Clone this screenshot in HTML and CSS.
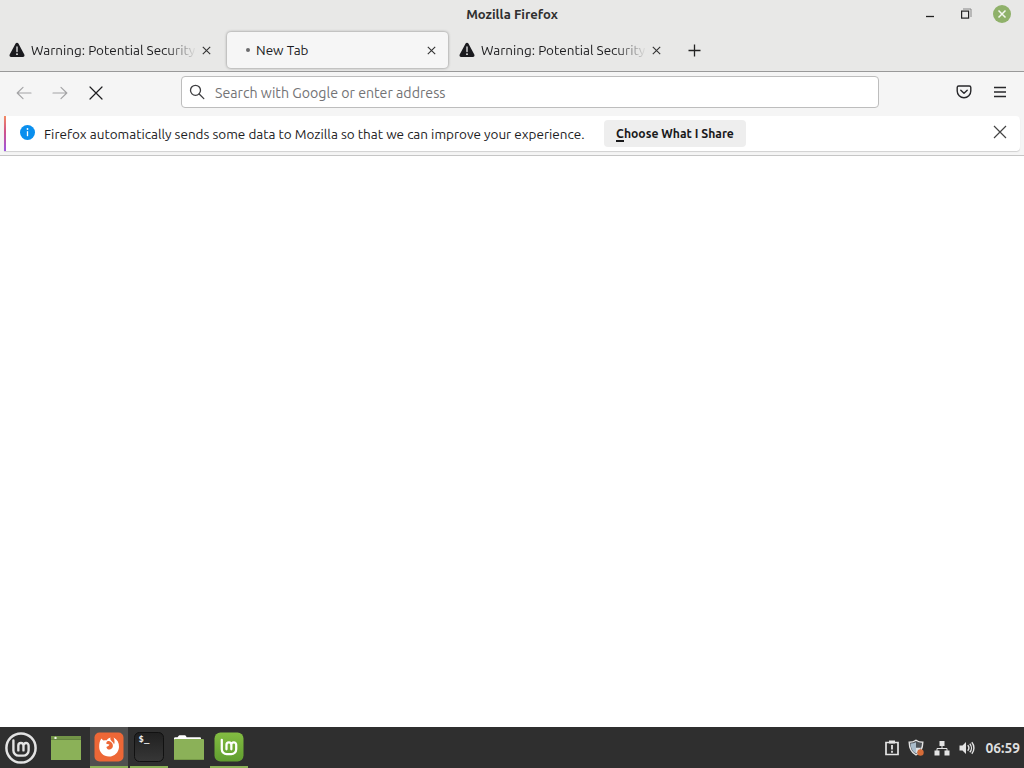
FILE: index.html
```
<!DOCTYPE html>
<html lang="en">
<head>
  <meta charset="UTF-8">
  <title>Mozilla Firefox</title>
  <link rel="stylesheet" href="styles.css">
</head>
<body>

<!-- shared icons -->
<svg class="defs" width="0" height="0">
  <symbol id="warning" viewBox="0 0 16 16">
    <path d="M6.6 1.6a1.6 1.6 0 0 1 2.8 0l5.9 11a1.6 1.6 0 0 1-1.4 2.4H2.1a1.6 1.6 0 0 1-1.4-2.4z" fill="#1b1b1f"/>
    <path d="M8 5v4.6" stroke="#eee" stroke-width="1.3" stroke-linecap="round"/>
    <circle cx="8" cy="12.2" r=".9" fill="#eee"/>
  </symbol>
  <symbol id="close" viewBox="0 0 9 9">
    <path d="M.8.8l7.4 7.4M8.2.8L.8 8.2" stroke="#333" stroke-width="1.1"/>
  </symbol>
  <symbol id="mint" viewBox="0 0 20 20">
    <path d="M2 2v10.5a5.5 5.5 0 0 0 5.5 5.500h5a5.500 5.500 0 0 0 5.500-5.500V7.500a2.700 2.700 0 0 0-5.400 0V12.500M12.600 7.500a2.700 2.700 0 0 0-5.400 0V12.500" fill="none" stroke="currentColor" stroke-width="2.5" stroke-linecap="round"/>
  </symbol>
</svg>

<header class="titlebar">
  <span class="title">Mozilla Firefox</span>
  <div class="window-buttons">
    <svg width="10" height="14" viewBox="0 0 10 14"><path d="M1 9.500h8" stroke="#222" stroke-width="1.300"/></svg>
    <svg width="12" height="12" viewBox="0 0 12 12" fill="none"><path d="M3 1h8v8" stroke="#888"/><rect x="1.600" y="3.100" width="7" height="7" stroke="#222" stroke-width="1.200"/></svg>
    <svg width="18" height="18" viewBox="0 0 18 18"><circle cx="9" cy="9" r="9" fill="#8fb16a"/><path d="M5.500 5.500l7 7M12.500 5.500l-7 7" stroke="#f4f7ef" stroke-width="1.500"/></svg>
  </div>
</header>

<nav class="tabs">
  <div class="tab">
    <svg class="tab-icon" width="16" height="16"><use href="#warning"/></svg>
    <span class="tab-label fade">Warning: Potential Security</span>
    <svg class="tab-close" width="9" height="9"><use href="#close"/></svg>
  </div>
  <div class="tab active">
    <span class="loading-dot"></span>
    <span class="tab-label">New Tab</span>
    <svg class="tab-close" width="9" height="9"><use href="#close"/></svg>
  </div>
  <div class="tab">
    <svg class="tab-icon" width="16" height="16"><use href="#warning"/></svg>
    <span class="tab-label fade">Warning: Potential Security</span>
    <svg class="tab-close" width="9" height="9"><use href="#close"/></svg>
  </div>
  <svg class="new-tab" width="13" height="13" viewBox="0 0 13 13"><path d="M6.500.5v12M.5 6.500h12" stroke="#222" stroke-width="1.300"/></svg>
</nav>

<div class="toolbar">
  <div class="nav-buttons">
    <svg width="16" height="16" viewBox="0 0 16 16" fill="none" stroke="#a4a4a6" stroke-width="1.200" stroke-linecap="round" stroke-linejoin="round"><path d="M15 8H1.200M7 2.400L1.200 8 7 13.600"/></svg>
    <svg width="16" height="16" viewBox="0 0 16 16" fill="none" stroke="#a4a4a6" stroke-width="1.200" stroke-linecap="round" stroke-linejoin="round"><path d="M1 8h13.800M9 2.400L14.800 8 9 13.600"/></svg>
    <svg width="16" height="16" viewBox="0 0 16 16" fill="none" stroke="#1d1d1f" stroke-width="1.200" stroke-linecap="round"><path d="M2 2l12 12M14 2L2 14"/></svg>
  </div>
  <div class="urlbar">
    <svg width="16" height="16" viewBox="0 0 16 16" fill="none" stroke="#3d3d40" stroke-width="1.300" stroke-linecap="round"><circle cx="6.500" cy="6.300" r="5"/><path d="M10.200 10l4.600 4.600"/></svg>
    <span class="placeholder">Search with Google or enter address</span>
  </div>
  <div class="tool-buttons">
    <svg width="16" height="16" viewBox="0 0 16 16" fill="none" stroke="#28282b" stroke-width="1.400" stroke-linecap="round" stroke-linejoin="round"><path d="M2.700 2h10.600a1.500 1.500 0 0 1 1.500 1.500V7a6.800 6.800 0 0 1-13.600 0V3.500A1.500 1.500 0 0 1 2.700 2z"/><path d="M4.800 6.200L8 9.200l3.200-3"/></svg>
    <svg width="16" height="16" viewBox="0 0 16 16" stroke="#28282b" stroke-width="1.300"><path d="M2 3.500h12M2 8h12M2 12.500h12"/></svg>
  </div>
</div>

<div class="notice-area">
  <div class="notice">
    <svg class="info" width="15" height="15" viewBox="0 0 15 15"><circle cx="7.500" cy="7.500" r="7.500" fill="#0a8fee"/><circle cx="7.500" cy="4" r=".9" fill="#fff"/><path d="M7.500 6.200v5" stroke="#fff" stroke-width="1.300"/></svg>
    <span class="notice-text">Firefox automatically sends some data to Mozilla so that we can improve your experience.</span>
    <button class="choose"><span class="accesskey">C</span>hoose What I Share</button>
    <svg class="notice-close" width="14" height="14" viewBox="0 0 14 14"><path d="M1 1l12 12M13 1L1 13" stroke="#444" stroke-width="1.200"/></svg>
  </div>
</div>

<main class="page"></main>

<footer class="panel">
  <div class="launchers">
    <div class="launcher menu">
      <svg width="32" height="32" viewBox="0 0 32 32"><circle cx="16" cy="16" r="14.600" fill="none" stroke="#e3e3e3" stroke-width="2.500"/><g color="#e3e3e3"><use href="#mint" x="6.500" y="6.500" width="19" height="19"/></g></svg>
    </div>
    <div class="launcher">
      <svg width="30" height="24" viewBox="0 0 30 24"><rect width="30" height="24" fill="#8bb158"/><path d="M0 0h30v3.500H0z" fill="#729447"/><circle cx="4.500" cy="2" r="1.200" fill="#f1f5e9"/><path d="M0 3.500h30" stroke="#658440"/></svg>
    </div>
    <div class="launcher running focused">
      <svg width="30" height="30" viewBox="0 0 30 30">
        <rect x=".5" y=".5" width="29" height="29" rx="5" fill="#ed6736"/>
        <path d="M7.500 6.500c.6 1 1.300 1.700 2.200 2.100 1-.4 2-.5 3-.4 1-1.200 2.200-2 3.800-2.600-.5 1.500 0 2.600 1.200 3.600 1.200.9 2 1.900 2.300 3.200.9-1.700.7-4-.4-6.900 3.600 2 5.600 5.200 5.400 9.400-.3 5.500-4.500 9.600-10 9.600s-9.800-4.200-9.800-9.500c0-3.600.4-6.500 2.300-8.500z" fill="#fff"/>
        <path d="M13.400 9.200c-.9.800-1.200 1.700-1.100 2.500l3.100.8c-.5 1.400-1.600 1.900-3 2.400.3 1.900 1.900 2.900 3.600 2.500 2.200-.5 3.300-2.500 2.800-4.700-.4-1.800-1.800-2.900-3.200-3.500-.8-.3-1.500-.3-2.200 0z" fill="#ed6736"/>
      </svg>
    </div>
    <div class="launcher running">
      <svg width="30" height="30" viewBox="0 0 30 30"><defs><linearGradient id="term" x2="0" y2="1"><stop stop-color="#202020"/><stop offset="1" stop-color="#373737"/></linearGradient></defs><rect x=".5" y=".5" width="29" height="29" rx="5" fill="url(#term)" stroke="#111"/><text x="4.500" y="10" class="term-text">$_</text></svg>
    </div>
    <div class="launcher">
      <svg width="30" height="26" viewBox="0 0 30 26"><path d="M0 4a1.500 1.500 0 0 1 1.500-1.800H3.500l1-1.200a1.500 1.500 0 0 1 1.200-.8h5a1.500 1.500 0 0 1 1.300.8l.6 1.200H26a1 1 0 0 1 1 1V5H0z" fill="#fff"/><rect y="4" width="30" height="21" rx="1" fill="#8bb158"/><path d="M0 24.500h30" stroke="#769a48"/></svg>
    </div>
    <div class="launcher running">
      <svg width="30" height="30" viewBox="0 0 30 30"><defs><linearGradient id="leaf" x2="0" y2="1"><stop stop-color="#83bd42"/><stop offset="1" stop-color="#609d2f"/></linearGradient></defs><rect x=".5" y=".5" width="29" height="29" rx="6" fill="url(#leaf)"/><g color="#fff"><use href="#mint" x="6" y="6" width="18" height="18"/></g></svg>
    </div>
  </div>
  <div class="tray">
    <svg width="16" height="18" viewBox="0 0 16 18"><path d="M2 3.500h12v12H2z" fill="none" stroke="#e4e4e4" stroke-width="1.700"/><path d="M5 1.500h6v3H5z" fill="#e4e4e4"/><path d="M8 6v4.500M8 11.700v2" stroke="#e4e4e4" stroke-width="1.800"/></svg>
    <svg width="17" height="18" viewBox="0 0 17 18"><path d="M8 1.200c2 1.500 4.200 2 6.800 2-.1 6-1.600 10-6.800 12.800C2.800 13.200 1.300 9.200 1.200 3.200c2.600 0 4.800-.5 6.800-2z" fill="#4e5358" stroke="#e4e4e4" stroke-width="1.400"/><path d="M8 3.200v11.300C4.100 12.300 2.800 9 2.600 4.500c2-.1 3.700-.5 5.400-1.300z" fill="#a9bccb"/><path d="M8 8.800h5c-1 2.600-2.300 4.300-5 5.700z" fill="#dcdfe2"/><circle cx="12.500" cy="13.500" r="3.200" fill="#d66c38"/></svg>
    <svg width="16" height="16" viewBox="0 0 16 16"><path d="M5.500 1h5v5h-5zM.5 10.500h5v5h-5zM10.500 10.500h5v5h-5z" fill="#e4e4e4"/><path d="M8 6v2.500M3 11V8.500h10V11" fill="none" stroke="#e4e4e4"/></svg>
    <svg width="16" height="16" viewBox="0 0 16 16"><path d="M.5 5.500h3L7 2v12l-3.500-3.500h-3z" fill="#e4e4e4"/><path d="M8.700 5.300a4 4 0 0 1 0 5.400M10.800 3.700a6.500 6.500 0 0 1 0 8.600M12.800 2.200a9 9 0 0 1 0 11.600" fill="none" stroke="#e4e4e4" stroke-width="1.400"/></svg>
    <span class="clock">06:59</span>
  </div>
</footer>

</body>
</html>
```
FILE: styles.css
```
* {
  box-sizing: border-box;
}

body {
  margin: 0;
  width: 1024px;
  height: 768px;
  display: flex;
  flex-direction: column;
  overflow: hidden;
  background: #fff;
  color: #1c1c1e;
  font-family: Ubuntu, "Noto Sans", sans-serif;
  font-size: 13.5px;
  white-space: nowrap;
}

svg {
  display: block;
  flex: none;
}

.defs {
  position: absolute;
}

/* window frame */
.titlebar {
  height: 29px;
  flex: none;
  display: grid;
  grid-template-columns: 1fr auto 1fr;
  align-items: center;
  background: #e8e8e7;
}

.title {
  grid-column: 2;
  margin-top: -2px;
  font-size: 13.1px;
  font-weight: 600;
  color: #303030;
}

.window-buttons {
  display: flex;
  align-items: center;
  justify-content: flex-end;
  padding-right: 13px;
  margin-top: -1px;
}

.window-buttons svg {
  margin-left: 21px;
}

.window-buttons svg:nth-child(2) {
  margin-left: 25px;
}

/* tabs */
.tabs {
  height: 43px;
  flex: none;
  display: flex;
  align-items: flex-start;
  padding: 3px 0 0 2px;
  background: #e8e8e7;
  border-bottom: 1px solid #999;
}

.tab {
  width: 221px;
  height: 36px;
  margin-right: 4px;
  padding: 0 12px 0 7px;
  display: flex;
  align-items: center;
  border-radius: 4px;
}

.tab.active {
  background: #f6f6f6;
  box-shadow: 0 0 3px rgba(0,0,0,0.45);
}

.tab-icon {
  margin-right: 6px;
}

.tab-label.fade {
  width: 170px;
  -webkit-mask-image: linear-gradient(to left, transparent 4px, #000 36px);
  mask-image: linear-gradient(to left, transparent 4px, #000 36px);
}

.tab-close {
  margin-left: auto;
}

.tab-label.fade + .tab-close {
  margin-left: 1px;
}

.loading-dot {
  width: 4px;
  height: 4px;
  margin: 0 6px 0 12px;
  border-radius: 50%;
  background: #6c6c6e;
}

.new-tab {
  margin: 12px 0 0 11px;
}

/* navigation */
.toolbar {
  height: 44px;
  flex: none;
  display: flex;
  align-items: center;
  padding: 0 16px;
  background: #f5f5f5;
}

.nav-buttons {
  width: 165px;
  margin-top: -2px;
  display: flex;
  gap: 20px;
}

.urlbar {
  width: 698px;
  height: 32px;
  margin-top: -4px;
  padding: 0 7px;
  display: flex;
  align-items: center;
  gap: 10px;
  background: #fff;
  border: 1px solid #bdbdbd;
  border-radius: 4px;
}

.placeholder {
  margin-top: 2px;
  font-size: 14.2px;
  color: #737375;
}

.tool-buttons {
  margin: -4px 0 0 auto;
  display: flex;
  gap: 20px;
}

/* data sharing notice */
.notice-area {
  height: 40px;
  flex: none;
  padding: 0 4px 4px;
  background: #f5f5f5;
  border-bottom: 1px solid #c6c6c6;
}

.notice {
  height: 35px;
  display: flex;
  align-items: center;
  padding: 0 13px 0 14px;
  background: linear-gradient(#f38b62, #d0528a 45%, #9c55e0) 0 0 / 2px 100% no-repeat #fff;
  border-radius: 0 4px 4px 0;
  box-shadow: 0 1px 1px rgba(0,0,0,0.15);
}

.info {
  margin: -3px 9px 0 2px;
}

.notice-text {
  width: 540px;
}

.choose {
  width: 142px;
  height: 27px;
  margin-left: 20px;
  padding: 1px 0 0;
  border: none;
  border-radius: 4px;
  background: #eee;
  color: #19191b;
  font-family: inherit;
  font-size: 12.2px;
  font-weight: 700;
}

.accesskey {
  border-bottom: 2px solid #19191b;
  display: inline-block;
  line-height: 12px;
}

.notice-close {
  margin: -3px 0 0 auto;
}

.page {
  flex: 1;
  background: #fff;
}

/* desktop panel */
.panel {
  height: 41px;
  flex: none;
  display: flex;
  justify-content: space-between;
  background: #2f2f2f;
}

.launchers {
  display: flex;
}

.launcher {
  width: 38px;
  height: 41px;
  margin-right: 2px;
  display: flex;
  align-items: center;
  justify-content: center;
}

.launcher.menu {
  width: 42px;
  margin-right: 5px;
}

.launcher.menu + .launcher {
  margin-right: 5px;
}

.launcher.running {
  border-bottom: 2px solid #8bb158;
}

.launcher.focused {
  background: #505050;
}

.term-text {
  font-family: "DejaVu Sans Mono", monospace;
  font-size: 9px;
  font-weight: bold;
  fill: #eee;
}

.tray {
  display: flex;
  align-items: center;
  gap: 9px;
  padding-right: 4px;
}

.tray svg:first-child {
  margin-right: -1px;
}

.clock {
  margin-left: 1px;
  font-size: 13.8px;
  font-weight: 600;
  color: #dedede;
}
```
